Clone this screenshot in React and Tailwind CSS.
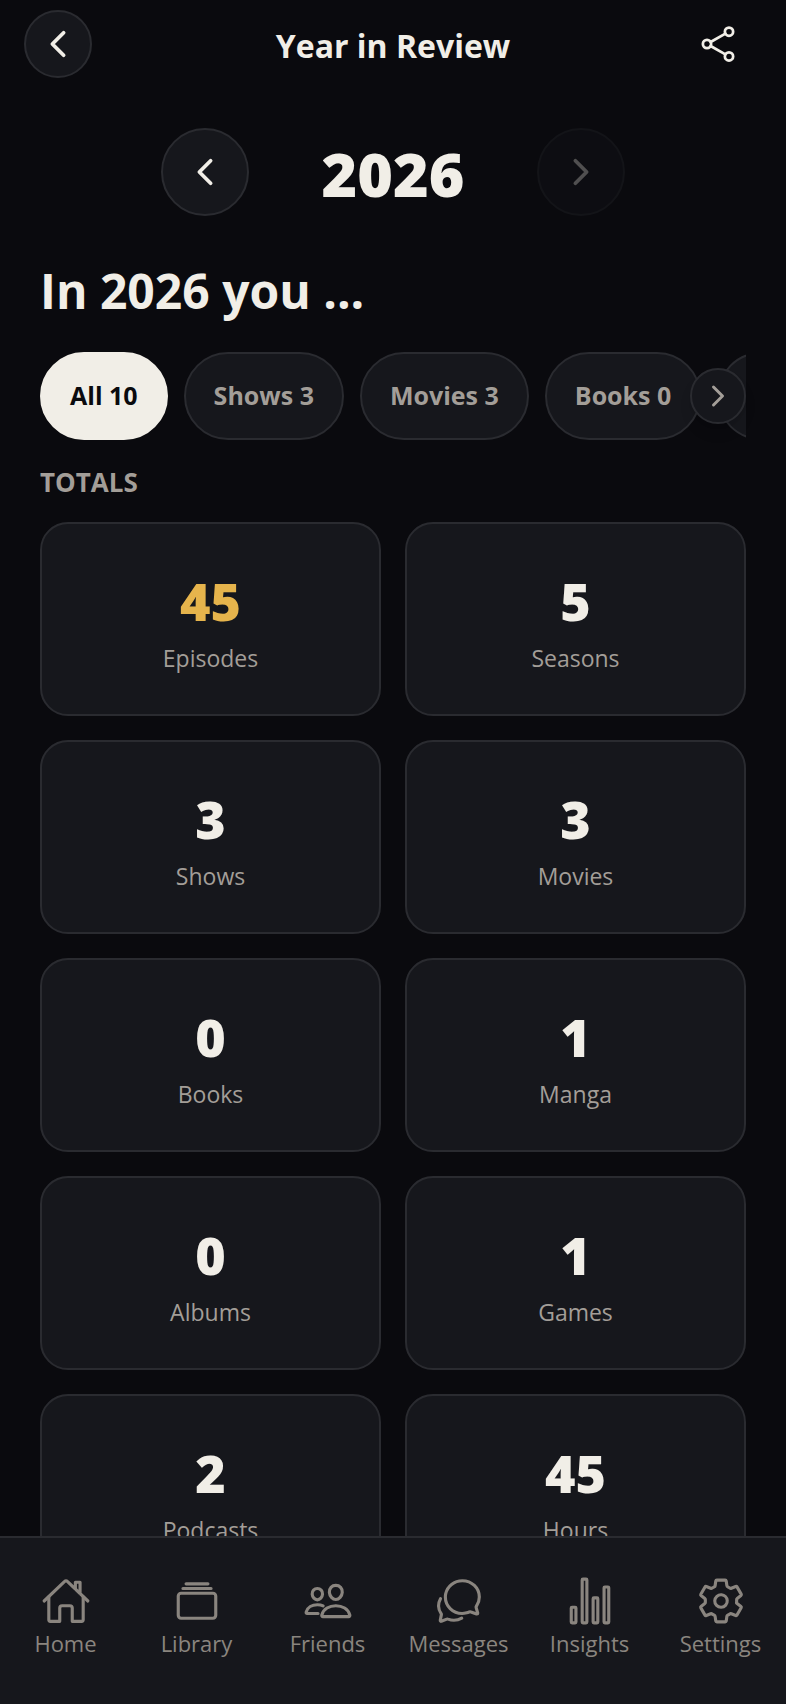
import { useRef, useState } from 'react';
import {
  IoAlbumsOutline,
  IoChatbubblesOutline,
  IoChevronBack,
  IoChevronForward,
  IoHomeOutline,
  IoPeopleOutline,
  IoSettingsOutline,
  IoShareSocialOutline,
  IoStatsChartOutline
} from 'react-icons/io5';

const currentYear = 2026;

const filters = [
  { name: 'All', count: 10 },
  { name: 'Shows', count: 3 },
  { name: 'Movies', count: 3 },
  { name: 'Books', count: 0 },
  { name: 'Manga', count: 1 }
];

const totals = [
  { label: 'Episodes', value: 45, highlight: true },
  { label: 'Seasons', value: 5 },
  { label: 'Shows', value: 3 },
  { label: 'Movies', value: 3 },
  { label: 'Books', value: 0 },
  { label: 'Manga', value: 1 },
  { label: 'Albums', value: 0 },
  { label: 'Games', value: 1 },
  { label: 'Podcasts', value: 2 },
  { label: 'Hours', value: 45 }
];

const tabs = [
  { label: 'Home', icon: IoHomeOutline },
  { label: 'Library', icon: IoAlbumsOutline },
  { label: 'Friends', icon: IoPeopleOutline },
  { label: 'Messages', icon: IoChatbubblesOutline },
  { label: 'Insights', icon: IoStatsChartOutline },
  { label: 'Settings', icon: IoSettingsOutline }
];

const Header = () => (
  <header className="grid grid-cols-[88px_1fr_88px] items-center px-6 pt-[10px]">
    <button
      aria-label="Back"
      className="flex size-[68px] items-center justify-center rounded-full border-2 border-[#2a2b30] bg-[#16171c]"
    >
      <IoChevronBack className="size-10" />
    </button>
    <h1 className="pt-1 text-center text-[32px] leading-[44px] font-bold">Year in Review</h1>
    <button aria-label="Share" className="flex h-[68px] items-center justify-center">
      <IoShareSocialOutline className="size-11" />
    </button>
  </header>
);

const YearButton = ({ label, icon: Icon, ...props }) => (
  <button
    aria-label={label}
    className="flex size-[88px] items-center justify-center rounded-full border-2 border-[#2a2b30] bg-[#16171c] disabled:opacity-30"
    {...props}
  >
    <Icon className="size-10" />
  </button>
);

const TotalCard = ({ label, value, highlight }) => (
  <div className="flex flex-col items-center rounded-[28px] border-2 border-[#2a2b30] bg-[#16171c] pt-[42px] pb-[38px]">
    <span className={`text-[52px] leading-[70px] font-black ${highlight ? 'text-[#e6b44c]' : ''}`}>
      {value}
    </span>
    <span className="pt-1 text-[23px] leading-9 text-[#a39e98]">{label}</span>
  </div>
);

const App = () => {
  const [year, setYear] = useState(currentYear);
  const [selected, setSelected] = useState('All');
  const filterRow = useRef(null);

  const scrollFilters = () => {
    filterRow.current.scrollBy({ left: 240, behavior: 'smooth' });
  };

  return (
    <div className="flex h-screen flex-col bg-[#0a0a0e] font-['Open_Sans','Noto_Sans',sans-serif] text-[#f1eee7]">
      <Header />

      <main className="min-h-0 flex-1 overflow-y-auto px-10 pt-[50px] [scrollbar-width:none]">
        <div className="flex items-center justify-center">
          <YearButton label="Previous year" icon={IoChevronBack} onClick={() => setYear(year - 1)} />
          <span className="w-72 pt-1 text-center text-[61px] leading-[84px] font-black">{year}</span>
          <YearButton
            label="Next year"
            icon={IoChevronForward}
            disabled={year >= currentYear}
            onClick={() => setYear(year + 1)}
          />
        </div>

        <h2 className="mt-[41px] text-[48px] leading-[68px] font-bold">In {year} you ...</h2>

        <div className="relative mt-[27px]">
          <div ref={filterRow} className="flex gap-4 overflow-x-auto [scrollbar-width:none]">
            {filters.map((filter) => (
              <button
                key={filter.name}
                onClick={() => setSelected(filter.name)}
                className={`h-[88px] shrink-0 rounded-full border-2 px-7 text-[25px] font-bold ${
                  selected === filter.name
                    ? 'border-[#f1eee7] bg-[#f1eee7] text-[#0a0a0e]'
                    : 'border-[#2a2b30] bg-[#16171c] text-[#a39e98]'
                }`}
              >
                {filter.name} {filter.count}
              </button>
            ))}
          </div>
          <button
            aria-label="More filters"
            onClick={scrollFilters}
            className="absolute top-4 right-0 flex size-14 items-center justify-center rounded-full border-2 border-[#2a2b30] bg-[#16171c] text-[#a39e98] shadow-lg"
          >
            <IoChevronForward className="size-8" />
          </button>
        </div>

        <h3 className="mt-6 text-[26px] leading-9 font-bold text-[#a39e98] uppercase">Totals</h3>

        <div className="mt-[22px] grid grid-cols-2 gap-6 pb-6">
          {totals.map((total) => (
            <TotalCard key={total.label} {...total} />
          ))}
        </div>
      </main>

      <nav className="grid grid-cols-6 border-t-2 border-[#2a2b30] bg-[#16171c] pt-[38px] pb-11 text-[#8a857f]">
        {tabs.map(({ label, icon: Icon }) => (
          <a key={label} href="#" className="flex flex-col items-center">
            <Icon className="size-[50px]" />
            <span className="text-[22px] leading-[34px] font-medium">{label}</span>
          </a>
        ))}
      </nav>
    </div>
  );
};

export default App;
